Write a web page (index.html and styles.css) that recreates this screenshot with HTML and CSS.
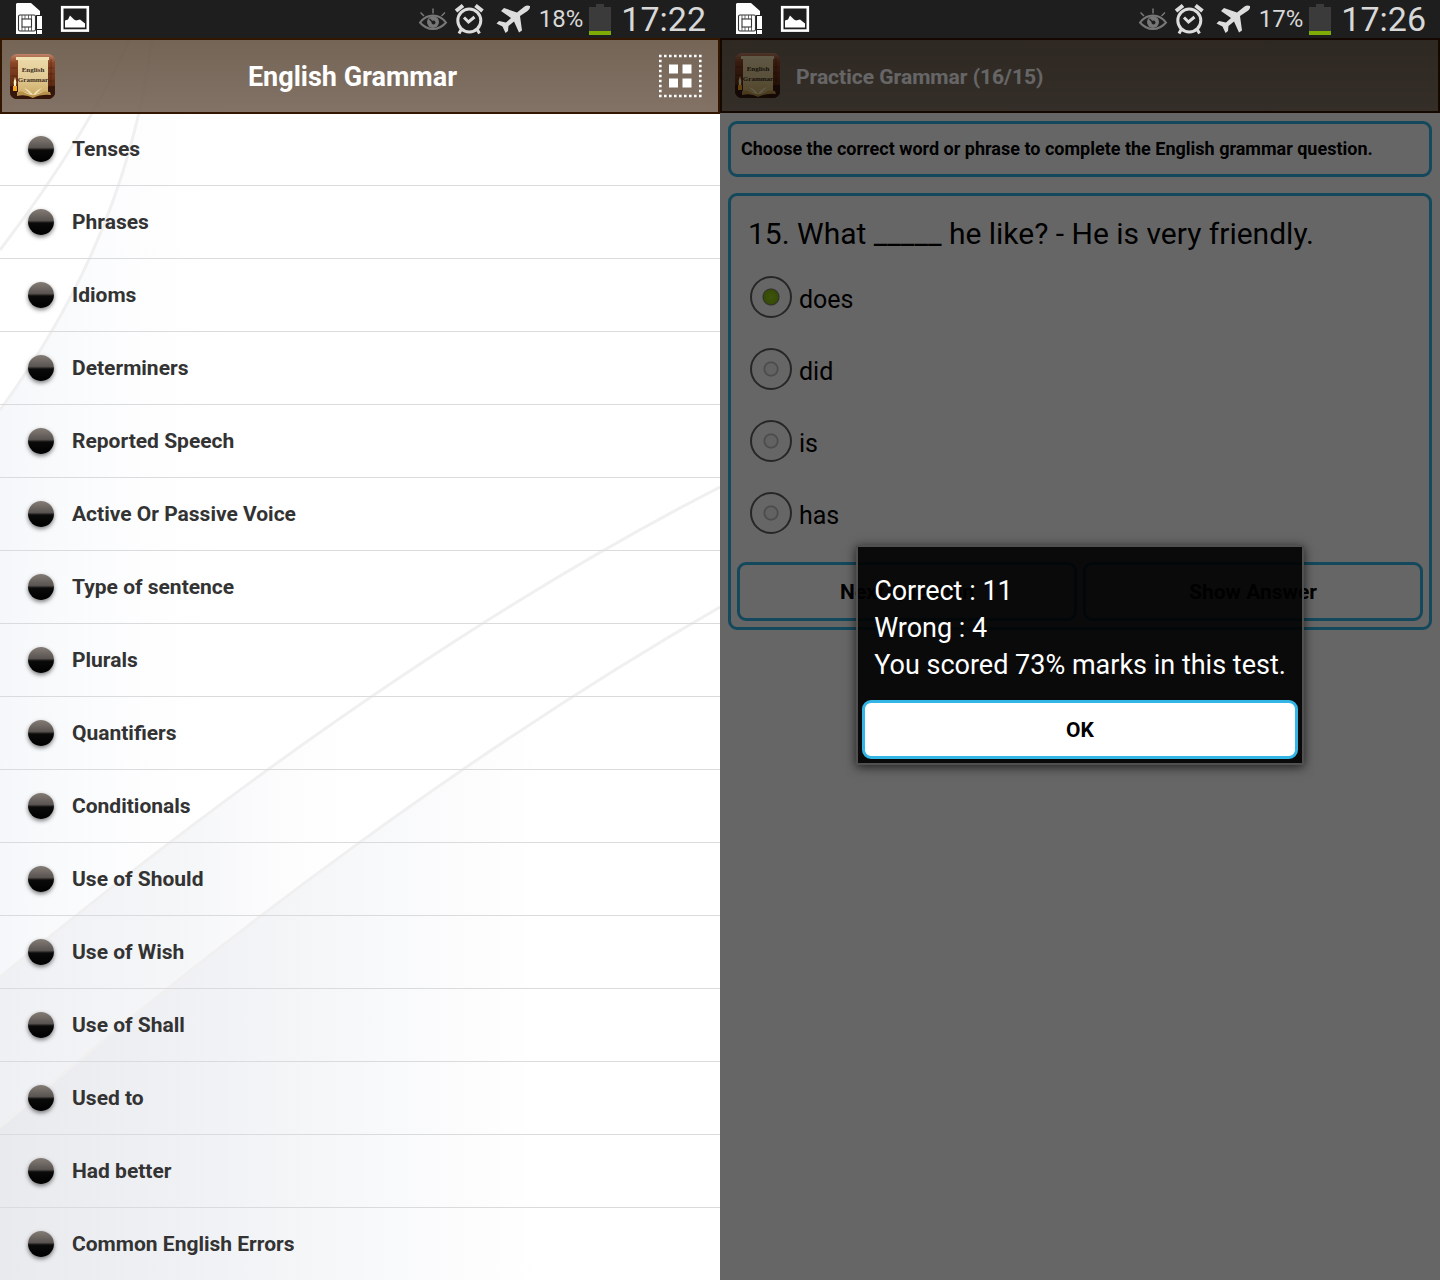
FILE: index.html
```html
<!DOCTYPE html>
<html lang="en">
<head>
<meta charset="utf-8">
<meta name="viewport" content="width=device-width, initial-scale=1">
<title>English Grammar</title>
<link rel="stylesheet" href="styles.css">
</head>
<body>
<!-- shared icons -->
<svg class="defs" width="0" height="0" aria-hidden="true">
  <defs>
    <linearGradient id="wood" x1="0" y1="0" x2="0" y2="1">
      <stop offset="0" stop-color="#c08468"/>
      <stop offset=".2" stop-color="#8a4526"/>
      <stop offset=".7" stop-color="#5e2a12"/>
      <stop offset="1" stop-color="#2e1204"/>
    </linearGradient>
    <linearGradient id="paper" x1="0" y1="0" x2="0" y2="1">
      <stop offset="0" stop-color="#ecd9a8"/>
      <stop offset=".5" stop-color="#e2cb96"/>
      <stop offset="1" stop-color="#c9a75f"/>
    </linearGradient>
  </defs>
  <symbol id="sim" viewBox="14 0 30 38">
    <path fill="#fff" d="M17 3h14l9 8v4h-4v19H16V4z"/>
    <rect x="18.500" y="15" width="17" height="16" rx="1.500" fill="none" stroke="#333" stroke-width="1.100"/>
    <rect x="22" y="19" width="9.500" height="8" fill="none" stroke="#333" stroke-width="1.100"/>
    <path stroke="#444" stroke-width=".8" d="M22 15v4M25 15v4M28.500 15v4M31.500 15v4M22 27v4M25 27v4M28.500 27v4M31.500 27v4"/>
    <path fill="#fff" stroke="#1e1e1e" d="M36.500 15.500h6v14h-6zM36.500 29.500h6v5h-6z"/>
  </symbol>
  <symbol id="photo" viewBox="60 4 30 30">
    <rect x="62.200" y="7.200" width="25.600" height="23.400" fill="none" stroke="#fff" stroke-width="2.600"/>
    <path fill="#fff" d="M65 27.500v-7l3-1 2-4 4 4 2 1 4-1 5 4v4z"/>
  </symbol>
  <symbol id="eye" viewBox="418 6 30 26">
    <path fill="none" stroke="#777" stroke-width="2" d="M420 22.500q5.500-7 13-7t13 7q-5.500 6.500-13 6.500t-13-6.500z"/>
    <circle cx="433" cy="22" r="6" fill="#777"/>
    <path stroke="#1e1e1e" stroke-width="1.500" d="M429.500 19l4 4"/>
    <circle cx="433.500" cy="22.500" r="2" fill="#1e1e1e"/>
    <path stroke="#777" stroke-width="1.500" d="M433 8.500v5M420.500 12.500l3.500 3.500M445 12.500l-3.500 3.500"/>
  </symbol>
  <symbol id="alarm" viewBox="454 3 30 32">
    <g fill="none" stroke="#ddd">
      <circle cx="469.300" cy="20.500" r="11.500" stroke-width="3"/>
      <path stroke-width="3" d="M464 17.500l4.500 4.500 6-5"/>
      <path stroke-width="4" d="M456 11l7-5.500M482.500 11l-7-5.500"/>
      <path stroke-width="3" d="M461.500 29l-2.500 4.500M477 29l2.500 4.500"/>
    </g>
  </symbol>
  <symbol id="plane" viewBox="496 4 35 31">
    <path fill="#ddd" d="M530 6q-3-1-5.500.5L517 12.500 504 8l-3 3 10 7-5 4.500-7-1.500-2.500 2.500 6 3 3 6.500 2.500-2 .5-5 5.500-4.500 5 11 3-2-2-14.500 7.500-5q3-2 2.500-5z"/>
  </symbol>
  <symbol id="battery" viewBox="590 3 22 32">
    <path fill="#3b3b3b" d="M590 7h7V4h8v3h7v24h-22z"/>
    <path fill="#7fab06" d="M590 31h22v4h-22z"/>
  </symbol>
  <symbol id="book" viewBox="0 0 45 45">
    <rect width="45" height="45" rx="7" fill="url(#wood)"/>
    <path stroke="#3d1808" stroke-width=".7" opacity=".6" d="M1 14h6M1 22h6M38 14h6M38 20h6M38 27h6M41 5v34"/>
    <path fill="#34170a" d="M0 32h8l6 6h20l5-6h6v6a7 7 0 0 1-7 7H7a7 7 0 0 1-7-7z"/>
    <path fill="url(#paper)" d="M8 4h30v35q-7-1-15 4-8-5-15-3z"/>
    <path fill="#f0dfb0" d="M6 3h33v3H6z"/>
    <path fill="#b8924c" d="M7 38q9-2 16 4 7-6 17-4l1 3q-10-1-18 3-7-4-16-2z"/>
    <path fill="#f1e2b4" d="M23 41q-3-5-9-7l6 6-8-3q6 4 11 4 5 0 11-4l-8 3 6-6q-6 2-9 7z"/>
    <path fill="#f6a01c" d="M3 32h4v5H3z"/>
    <path fill="#fff3c0" d="M5 23q2 5 1 9H4q-1-4 1-9z"/>
  </symbol>
  <symbol id="grid" viewBox="0 0 44 44">
    <path stroke="#fff" stroke-width="2.600" stroke-dasharray="2.600 2.400" d="M1 2h43M1 42h43M2.300 .7v43M42.300 .7v43"/>
    <path fill="#fff" d="M11 10.500h9v9h-9zM24.500 10.500h9v9h-9zM11 24.500h9v9h-9zM24.500 24.500h9v9h-9z"/>
  </symbol>
</svg>

<main class="phones">
  <section class="phone">
    <div class="statusbar">
      <svg class="s-sim"><use href="#sim"/></svg>
      <svg class="s-photo"><use href="#photo"/></svg>
      <svg class="s-eye"><use href="#eye"/></svg>
      <svg class="s-alarm"><use href="#alarm"/></svg>
      <svg class="s-plane"><use href="#plane"/></svg>
      <span class="percent">18%</span>
      <svg class="s-battery"><use href="#battery"/></svg>
      <span class="time">17:22</span>
    </div>
    <div class="screen">
      <svg class="curves" viewBox="0 38 720 1242" preserveAspectRatio="none" aria-hidden="true">
        <defs>
          <linearGradient id="g1" gradientUnits="userSpaceOnUse" x1="0" y1="0" x2="220" y2="0">
            <stop offset="0" stop-color="#f5f7fa"/><stop offset="1" stop-color="#fbfcfd" stop-opacity="0"/>
          </linearGradient>
          <linearGradient id="g2" gradientUnits="userSpaceOnUse" x1="0" y1="0" x2="400" y2="0">
            <stop offset="0" stop-color="#eff0f3"/><stop offset=".5" stop-color="#f6f7f9"/><stop offset="1" stop-color="#fff" stop-opacity="0"/>
          </linearGradient>
          <linearGradient id="g3" gradientUnits="userSpaceOnUse" x1="0" y1="0" x2="540" y2="0">
            <stop offset="0" stop-color="#e9eaee"/><stop offset=".4" stop-color="#f1f2f5"/><stop offset=".7" stop-color="#f8f9fa"/><stop offset="1" stop-color="#fff"/>
          </linearGradient>
        </defs>
        <path fill="url(#g1)" d="M152 38Q128 235 0 410V1280H240V38z"/>
        <path fill="url(#g2)" d="M720 487C480 610 240 780 0 977V1280H720z"/>
        <path fill="url(#g3)" d="M720 607C480 745 230 930 0 1127V1280H720z"/>
        <g fill="none" stroke="#f0f0f1" stroke-width="3">
          <path d="M130 38Q88 135 0 250"/>
          <path d="M152 38Q128 235 0 410"/>
          <path d="M720 487C480 610 240 780 0 977"/>
          <path d="M720 607C480 745 230 930 0 1127"/>
        </g>
      </svg>
      <header class="bar">
        <svg class="logo" viewBox="0 0 45 45">
          <use href="#book"/>
          <text x="23" y="18">English</text>
          <text x="23" y="28">Grammar</text>
        </svg>
        <h1 class="title">English Grammar</h1>
        <button class="gridbtn" aria-label="Grid view"><svg><use href="#grid"/></svg></button>
      </header>
      <ul class="topics">
        <li><a href="#">Tenses</a></li>
        <li><a href="#">Phrases</a></li>
        <li><a href="#">Idioms</a></li>
        <li><a href="#">Determiners</a></li>
        <li><a href="#">Reported Speech</a></li>
        <li><a href="#">Active Or Passive Voice</a></li>
        <li><a href="#">Type of sentence</a></li>
        <li><a href="#">Plurals</a></li>
        <li><a href="#">Quantifiers</a></li>
        <li><a href="#">Conditionals</a></li>
        <li><a href="#">Use of Should</a></li>
        <li><a href="#">Use of Wish</a></li>
        <li><a href="#">Use of Shall</a></li>
        <li><a href="#">Used to</a></li>
        <li><a href="#">Had better</a></li>
        <li><a href="#">Common English Errors</a></li>
      </ul>
    </div>
  </section>

  <section class="phone">
    <div class="statusbar">
      <svg class="s-sim"><use href="#sim"/></svg>
      <svg class="s-photo"><use href="#photo"/></svg>
      <svg class="s-eye"><use href="#eye"/></svg>
      <svg class="s-alarm"><use href="#alarm"/></svg>
      <svg class="s-plane"><use href="#plane"/></svg>
      <span class="percent">17%</span>
      <svg class="s-battery"><use href="#battery"/></svg>
      <span class="time">17:26</span>
    </div>
    <div class="screen">
      <header class="bar bar-quiz">
        <svg class="logo" viewBox="0 0 45 45">
          <use href="#book"/>
          <text x="23" y="18">English</text>
          <text x="23" y="28">Grammar</text>
        </svg>
        <h2 class="subtitle">Practice Grammar (16/15)</h2>
      </header>
      <p class="box hint">Choose the correct word or phrase to complete the English grammar question.</p>
      <form class="box quiz">
        <p class="question" id="question">15. What _____ he like? - He is very friendly.</p>
        <div role="radiogroup" aria-labelledby="question">
          <label class="option"><input type="radio" name="answer" checked><span>does</span></label>
          <label class="option"><input type="radio" name="answer"><span>did</span></label>
          <label class="option"><input type="radio" name="answer"><span>is</span></label>
          <label class="option"><input type="radio" name="answer"><span>has</span></label>
        </div>
        <div class="actions">
          <button type="button" class="btn">Next Question</button>
          <button type="button" class="btn">Show Answer</button>
        </div>
      </form>
      <div class="overlay">
        <div class="dialog" role="dialog" aria-label="Score">
          <div class="score">
            <p>Correct : 11</p>
            <p>Wrong : 4</p>
            <p>You scored 73% marks in this test.</p>
          </div>
          <button type="button" class="btn">OK</button>
        </div>
      </div>
    </div>
  </section>
</main>
</body>
</html>
```
FILE: styles.css
```css
* {
  box-sizing: border-box;
}
body {
  margin: 0;
  font-family: Roboto, "Liberation Sans", sans-serif;
  color: #000;
  background: #fff;
}
h1, h2, p, ul {
  margin: 0;
  padding: 0;
}
svg {
  display: block;
}
.defs {
  position: absolute;
}
.phones {
  display: grid;
  grid-template-columns: 1fr 1fr;
  min-height: 100vh;
}
.phone {
  display: flex;
  flex-direction: column;
  min-width: 0;
}
.screen {
  position: relative;
  flex: 1;
}

/* status bar */
.statusbar {
  display: flex;
  align-items: center;
  height: 38px;
  padding: 0 14px;
  background: #1e1e1e;
  color: #d8d8d8;
}
.statusbar svg {
  flex: none;
}
.s-sim { width: 30px; height: 38px; }
.s-photo { width: 30px; height: 30px; margin-left: 16px; }
.s-eye { width: 30px; height: 26px; margin-left: auto; }
.s-alarm { width: 30px; height: 32px; margin-left: 6px; }
.s-plane { width: 35px; height: 31px; margin-left: 12px; }
.s-battery { width: 22px; height: 32px; margin-left: 6px; }
.percent {
  margin-left: 8px;
  font-size: 24px;
}
.time {
  margin-left: 10px;
  font-size: 34px;
  line-height: 38px;
}

/* title bar */
.bar {
  position: relative;
  display: flex;
  align-items: center;
  height: 76px;
  padding: 0 8px;
  border: 2px solid #321600;
  background: linear-gradient(rgba(101, 84, 68, .9), rgba(117, 99, 85, .9));
  color: #fff;
}
.bar-quiz {
  height: 75px;
  padding: 0 13px;
}
.logo {
  flex: none;
  width: 45px;
  height: 45px;
}
.logo text {
  font: bold 7px "Liberation Serif", serif;
  fill: #3a2c1c;
  text-anchor: middle;
}
.title {
  flex: 1;
  padding-top: 2px;
  font-size: 27px;
  font-weight: 700;
  text-align: center;
}
.subtitle {
  margin-left: 16px;
  padding-top: 2px;
  font-size: 21px;
  font-weight: 700;
}
.gridbtn {
  width: 60px;
  height: 60px;
  padding: 8px;
  border: 0;
  background: none;
}
.gridbtn svg {
  width: 44px;
  height: 44px;
}

/* topic list */
.curves {
  position: absolute;
  top: 0;
  left: 0;
  width: 100%;
  height: 100%;
}
.topics {
  position: relative;
  margin-top: -1px;
  list-style: none;
}
.topics li {
  border-bottom: 1px solid #dadbdc;
}
.topics li:last-child {
  border-bottom: 0;
}
.topics a {
  display: flex;
  align-items: center;
  height: 72px;
  padding-left: 28px;
  color: #333;
  font-size: 21px;
  font-weight: 700;
  text-decoration: none;
}
.topics a::before {
  content: "";
  width: 26px;
  height: 26px;
  margin-right: 18px;
  border-radius: 50%;
  background: linear-gradient(#847b75, #5a5552 44%, #0a0a0a 54%, #000);
  box-shadow: 0 2px 4px rgba(0, 0, 0, .5);
}

/* quiz */
.box {
  margin: 8px 8px 16px;
  border: 3px solid #33b5e5;
  border-radius: 9px;
}
.hint {
  padding: 0 10px;
  font-size: 18px;
  font-weight: 700;
  line-height: 50px;
}
.quiz {
  padding: 6px;
}
.question {
  padding: 4px 11px 0;
  font-size: 30px;
  line-height: 55px;
}
.option {
  display: flex;
  align-items: center;
  height: 72px;
  padding-left: 13px;
  font-size: 25px;
}
.option span {
  padding: 5px 0 0 7px;
}
.option input {
  appearance: none;
  width: 42px;
  height: 42px;
  margin: 0;
  border: 2px solid #606060;
  border-radius: 50%;
  background: radial-gradient(circle, #f4f4f4 5px, #b4b4b4 7px, transparent 8px);
}
.option input:checked {
  background: radial-gradient(circle, #9bd01c 0, #88bb10 7px, #777 8px, transparent 9px);
}
.actions {
  display: grid;
  grid-template-columns: 1fr 1fr;
  gap: 6px;
  margin-top: 13px;
}
.btn {
  height: 59px;
  border: 3px solid #33b5e5;
  border-radius: 9px;
  background: #fff;
  color: #000;
  font-family: inherit;
  font-size: 21px;
  font-weight: 700;
}

/* score dialog */
.overlay {
  position: absolute;
  top: 0;
  right: 0;
  bottom: 0;
  left: 0;
  display: flex;
  align-items: center;
  justify-content: center;
  padding-bottom: 8px;
  background: rgba(0, 0, 0, .6);
}
.dialog {
  display: flex;
  flex-direction: column;
  padding: 4px;
  border: 2px solid #505050;
  background: rgba(0, 0, 0, .9);
  background-clip: padding-box;
  box-shadow: 0 2px 10px rgba(0, 0, 0, .7);
  color: #fff;
}
.score {
  padding: 22px 12px 16px;
  font-size: 27px;
  line-height: 37px;
}
```
